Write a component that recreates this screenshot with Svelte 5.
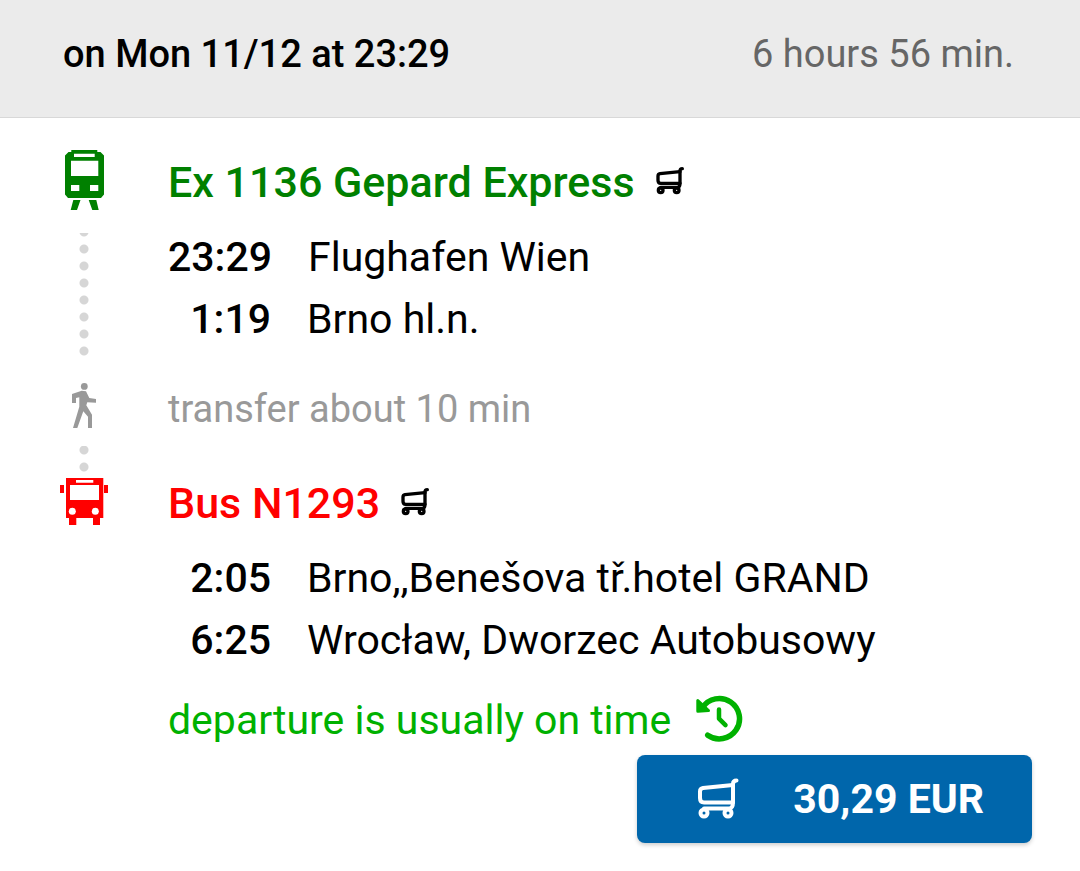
<script lang="ts">
  interface Stop {
    time: string;
    name: string;
  }

  interface Leg {
    kind: "train" | "bus";
    title: string;
    stops: Stop[];
    transfer?: string;
    delay?: string;
  }

  const departure = "on Mon 11/12 at 23:29";
  const duration = "6 hours 56 min.";
  const price = "30,29 EUR";

  const legs: Leg[] = [
    {
      kind: "train",
      title: "Ex 1136 Gepard Express",
      stops: [
        { time: "23:29", name: "Flughafen Wien" },
        { time: "1:19", name: "Brno hl.n." },
      ],
      transfer: "transfer about 10 min",
    },
    {
      kind: "bus",
      title: "Bus N1293",
      stops: [
        { time: "2:05", name: "Brno,,Benešova tř.hotel GRAND" },
        { time: "6:25", name: "Wrocław, Dworzec Autobusowy" },
      ],
      delay: "departure is usually on time",
    },
  ];
</script>

{#snippet cart()}
  <svg class="cart" viewBox="0 0 42 42" aria-hidden="true">
    <g fill="none" stroke="currentColor" stroke-linecap="round" stroke-linejoin="round">
      <path d="M39.500 2.500Q36 2.500 36 6V24Q36 30.500 32 30.500H7" />
      <path d="M36 7L6 10Q3 10.500 3 13.500V20Q3 24.500 7 24.500H36" />
      <circle cx="7" cy="35" r="3.500" />
      <circle cx="31" cy="35" r="3.500" />
    </g>
  </svg>
{/snippet}

<article class="connection">
  <header>
    <h2>{departure}</h2>
    <span class="duration">{duration}</span>
  </header>

  <div class="legs">
    {#each legs as leg}
      <section class="leg {leg.kind}">
        <div class="rail">
          {#if leg.kind === "train"}
            <svg width="48" height="60" viewBox="0 0 48 60" fill="currentColor" aria-hidden="true">
              <path
                fill-rule="evenodd"
                d="M11.300 0H37.300V2H40.500L44 5.500V44.500L41 48H8L5 44.500V5.500L8.500 2H11.300ZM14 3.700V7H34.700V3.700ZM11 10.700V26H38.300V10.700ZM11 35V41H19.300V35ZM30 35V41H38.300V35Z"
              />
              <path d="M13.300 50H20.500L17 60H10.700ZM28.700 50H36.300L38.700 60H32.300Z" />
            </svg>
            <div class="dots"></div>
          {:else}
            <svg width="48" height="48" viewBox="0 0 48 48" fill="currentColor" aria-hidden="true">
              <path
                fill-rule="evenodd"
                d="M6 0H43.300V40H40V47H33V40H16.300V47H9V40H6ZM16 2V4.700H33.300V2ZM10 7V22H39V7ZM0 7H4V15H0ZM44 7H48V15H44Z"
              />
              <circle cx="12.300" cy="33.300" r="3.500" fill="#fff" />
              <circle cx="35.300" cy="33.300" r="3.500" fill="#fff" />
            </svg>
          {/if}
        </div>
        <div class="info">
          <h3>{leg.title} {@render cart()}</h3>
          <ul>
            {#each leg.stops as stop}
              <li>
                <time>{stop.time}</time>
                <span>{stop.name}</span>
              </li>
            {/each}
          </ul>
          {#if leg.delay}
            <p class="delay">
              {leg.delay}
              <svg width="48" height="52" viewBox="0 0 48 52" aria-hidden="true">
                <g fill="none" stroke="currentColor" stroke-linecap="round" stroke-linejoin="round">
                  <path stroke-width="5.500" d="M12.700 41.200A20.200 20.200 0 1 0 7.500 13.500" />
                  <path stroke-width="4.500" d="M24 15.500V24.700L30.500 31.200" />
                  <path stroke-width="3" fill="currentColor" d="M2.800 6.500V17.200L13.500 16.500Z" />
                </g>
              </svg>
            </p>
          {/if}
        </div>
      </section>

      {#if leg.transfer}
        <section class="leg transfer">
          <div class="rail">
            <svg width="28" height="46" viewBox="0 0 28 46" fill="currentColor" aria-hidden="true">
              <circle cx="14.300" cy="3.400" r="3.400" />
              <path
                d="M11.700 7.700L16 8.300L19.300 15L26 16V19.700L17.300 19.300L16.300 22.300L22 31.700V45H18V33.700L13.300 28.300L7.300 45H3L9.300 23.700V14.300L6 15V20H2V11Z"
              />
            </svg>
            <div class="dots"></div>
          </div>
          <p>{leg.transfer}</p>
        </section>
      {/if}
    {/each}
  </div>

  <footer>
    <button type="button">
      {@render cart()}
      <span>{price}</span>
    </button>
  </footer>
</article>

<style>
  :global(body) {
    margin: 0;
    background: #fff;
  }

  .connection {
    font-family: Roboto, "Noto Sans", sans-serif;
    font-size: 41px;
    color: #000;
  }

  h2,
  h3,
  p,
  ul {
    margin: 0;
    padding: 0;
  }

  header {
    display: flex;
    justify-content: space-between;
    align-items: center;
    padding: 24px 66px 33px 63px;
    font-size: 38px;
    line-height: 60px;
    background: #ebebeb;
    border-bottom: 1px solid #d8d8d8;
  }

  h2 {
    font-size: inherit;
    font-weight: 500;
  }

  .duration {
    color: #666;
  }

  .legs {
    padding: 32px 48px 0 60px;
  }

  .leg {
    display: flex;
    gap: 60px;
  }

  .rail {
    display: flex;
    flex: 0 0 48px;
    flex-direction: column;
    align-items: center;
  }

  .dots {
    flex: 1;
    width: 10px;
    margin-top: 23px;
    background: radial-gradient(circle at 5px 12px, #d6d6d6 4px, transparent 5px) left bottom / 10px 17px repeat-y;
  }

  .info {
    flex: 1;
  }

  h3 {
    display: flex;
    align-items: center;
    gap: 21px;
    margin-bottom: 12px;
    font-size: 43px;
    font-weight: 500;
    line-height: 64px;
  }

  .cart {
    width: 42px;
    height: 42px;
    stroke-width: 4px;
  }

  h3 .cart {
    width: 28px;
    height: 28px;
    margin-bottom: 2px;
    color: #000;
    stroke-width: 5px;
  }

  .train .rail,
  .train h3 {
    color: #008000;
  }

  .train ul {
    padding-bottom: 6px;
  }

  .bus .rail,
  .bus h3 {
    color: #f00;
  }

  .bus .rail {
    padding-top: 7px;
  }

  li {
    display: flex;
    gap: 36px;
    line-height: 62px;
  }

  time {
    flex: 0 0 103px;
    font-weight: 500;
    text-align: right;
  }

  .transfer {
    padding-top: 22px;
    font-size: 38px;
    color: #999;
  }

  .transfer .rail {
    padding-top: 5px;
  }

  .transfer .dots {
    flex: none;
    height: 26px;
    margin: 17px 0 -1px;
  }

  .transfer p {
    line-height: 62px;
  }

  .delay {
    display: flex;
    align-items: center;
    gap: 24px;
    margin-top: 18px;
    line-height: 62px;
    color: #00b100;
  }

  footer {
    display: flex;
    justify-content: flex-end;
    padding: 4px 48px 28px;
  }

  button {
    display: flex;
    align-items: center;
    gap: 54px;
    height: 88px;
    padding: 0 48px 0 60px;
    font: inherit;
    font-weight: 700;
    color: #fff;
    background: #0066ab;
    border: 0;
    border-radius: 8px;
    box-shadow: 0 2px 4px rgba(0, 0, 0, 0.2);
    cursor: pointer;
  }
</style>
